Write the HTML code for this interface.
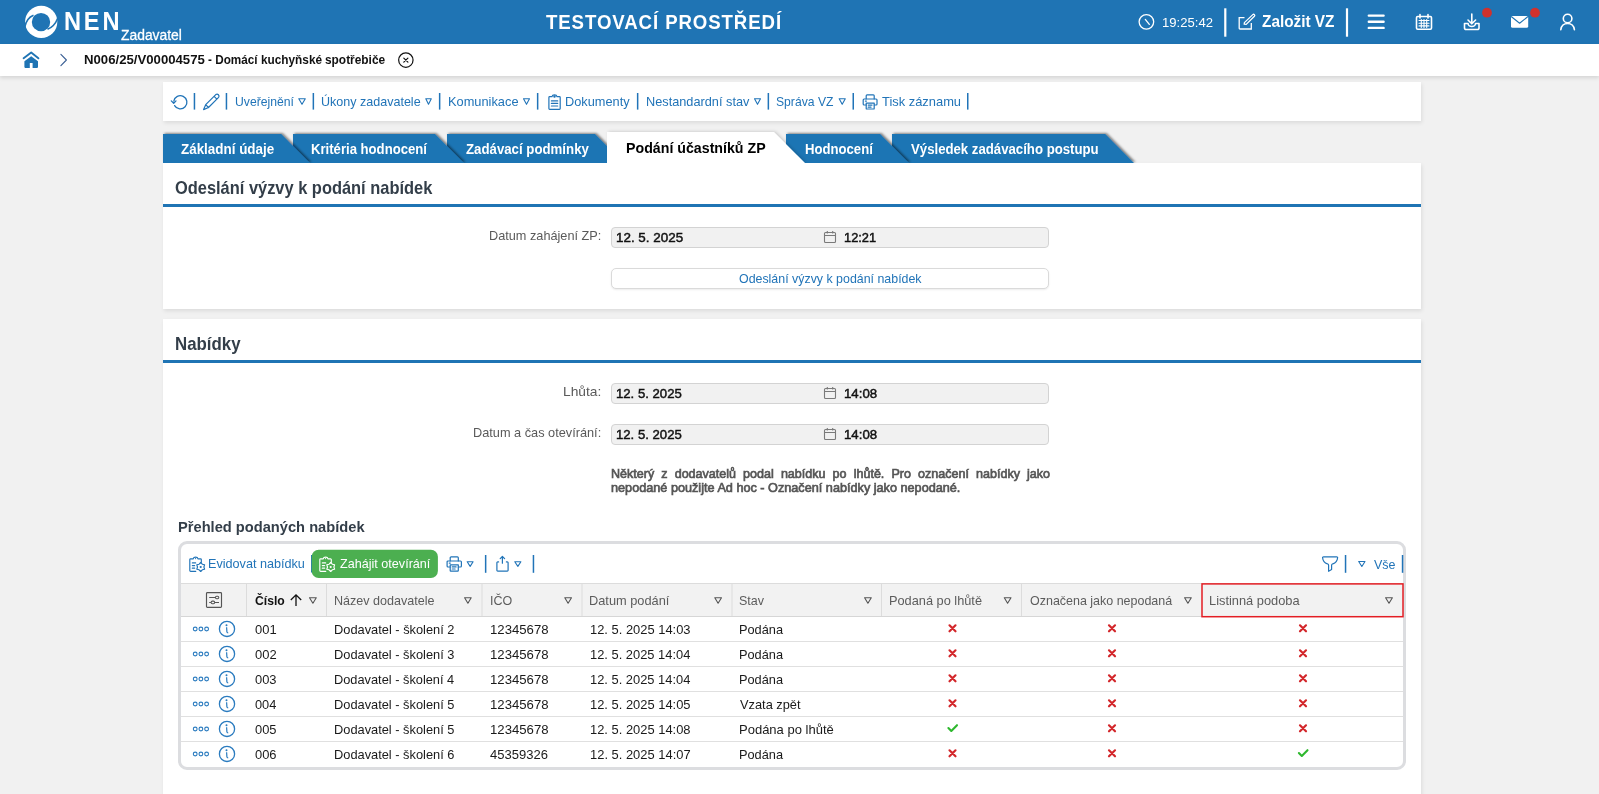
<!DOCTYPE html>
<html><head><meta charset="utf-8"><title>NEN</title>
<style>
html,body{margin:0;padding:0;}
body{width:1599px;height:794px;overflow:hidden;position:relative;background:#f1f1f1;font-family:"Liberation Sans",sans-serif;}
.tx{position:absolute;white-space:nowrap;line-height:1;transform-origin:0 50%;}
.a{position:absolute;}
.hdr{left:0;top:0;width:1599px;height:44px;background:#1f74b4;}
.bc{left:0;top:44px;width:1599px;height:32px;background:#fff;box-shadow:0 2px 4px rgba(0,0,0,.12);}
.panel{background:#fff;box-shadow:1px 2px 4px rgba(0,0,0,.09);}
.sep{position:absolute;width:2px;background:#2071b5;}
.hsep{position:absolute;width:2px;background:#fff;}
.inp{position:absolute;left:611px;width:436px;height:19px;background:#f1f1f1;border:1px solid #d3d3d3;border-radius:4px;}
.btn{position:absolute;left:611px;width:436px;height:18px;background:#fff;border:1px solid #dadada;border-radius:5px;box-shadow:0 1px 2px rgba(0,0,0,.08);}
.line{position:absolute;height:1px;background:#dedede;}
.vline{position:absolute;width:1px;background:#d8d8d8;}
svg{position:absolute;overflow:visible;}

</style></head><body>
<div class="a hdr"></div>
<div class="a bc"></div>
<!-- logo -->
<svg style="left:0;top:0" width="70" height="44" viewBox="0 0 70 44">
  <circle cx="41.2" cy="21.9" r="16.1" fill="#fff"/>
  <circle cx="41" cy="22.1" r="9.2" fill="#1f74b4"/>
  <path d="M24.6 27.5 C 26 21, 29 17, 33.5 15.3" fill="none" stroke="#1f74b4" stroke-width="1.6"/>
  <path d="M57.6 18.5 C 55.5 24, 52 27.5, 47.5 29.3" fill="none" stroke="#1f74b4" stroke-width="1.6"/>
</svg>
<!-- header right icons -->
<svg style="left:1130px;top:0" width="469" height="44" viewBox="1130 0 469 44" fill="none" stroke="#fff" stroke-width="1.6" stroke-linecap="round" stroke-linejoin="round">
  <!-- clock -->
  <circle cx="1146.4" cy="21.85" r="7.3" stroke-width="1.3"/>
  <path d="M1145.3 19.4 L1149.3 24.4" stroke-width="1.3"/>
  <!-- separators -->
  <rect x="1224.2" y="8.3" width="2.2" height="28.4" fill="#fff" stroke="none"/>
  <rect x="1345.9" y="8.3" width="2.2" height="28.4" fill="#fff" stroke="none"/>
  <!-- edit -->
  <path d="M1244.5 17.6 H1239.2 V28.2 a0.8 0.8 0 0 0 0.8 0.8 H1251.3 V23" stroke-width="1.3" stroke-linejoin="miter" stroke-linecap="butt"/>
  <path d="M1252.8 14.6 a1.1 1.1 0 0 1 1.6 1.6 L1246.2 24.4 L1244.2 24.2 L1244.4 22.6 Z" stroke-width="1.3"/>
  <!-- hamburger -->
  <path d="M1368.8 15.6 H1383.6 M1368.8 21.8 H1383.6 M1368.8 27.9 H1383.6" stroke-width="2.4"/>
  <!-- calendar -->
  <rect x="1416.5" y="16.5" width="15" height="12.8" rx="1.2"/>
  <path d="M1420 14.5 V18 M1428 14.5 V18" />
  <path d="M1419 20.5 H1429 M1419 23.2 H1429 M1419 25.9 H1429 M1421.3 19.5 V27.5 M1424 19.5 V27.5 M1426.7 19.5 V27.5" stroke-width="1.1"/>
  <!-- download -->
  <path d="M1471.8 14 V23.5 M1468 20 L1471.8 23.8 L1475.6 20"/>
  <path d="M1464.5 23.5 V28 a1.5 1.5 0 0 0 1.5 1.5 H1477.5 a1.5 1.5 0 0 0 1.5 -1.5 V23.5 H1475.5 a3.7 3 0 0 1 -7.4 0 H1464.5"/>
  <!-- mail -->
  <rect x="1511" y="16" width="17.2" height="11.8" rx="1.6" fill="#fff" stroke="none"/>
  <path d="M1511.5 16.8 L1519.6 23.2 L1527.7 16.8" stroke="#1f74b4" stroke-width="1.1"/>
  <!-- user -->
  <circle cx="1567.6" cy="18.5" r="4.3"/>
  <path d="M1560.8 29.6 C1561.5 25, 1564 23.5, 1567.6 23.5 C1571.2 23.5, 1573.7 25, 1574.4 29.6"/>
  <!-- red dots -->
  <circle cx="1487" cy="12.7" r="4.9" fill="#d0312d" stroke="none"/>
  <circle cx="1535" cy="12.7" r="4.9" fill="#d0312d" stroke="none"/>
</svg>
<!-- breadcrumb icons -->
<svg style="left:0;top:44px" width="440" height="32" viewBox="0 44 440 32">
  <path d="M23.6 58.3 L31.2 52.6 L38.4 58.3" fill="none" stroke="#1f74b4" stroke-width="1.9" stroke-linejoin="round" stroke-linecap="round"/>
  <path d="M24.4 61.3 L31.2 56.2 L38 61.3 V67.1 a0.8 0.8 0 0 1 -0.8 0.8 H32.6 V62.9 H29.8 V67.9 H25.2 a0.8 0.8 0 0 1 -0.8 -0.8 Z" fill="#1f74b4"/>
  <path d="M60.9 54.3 L66.4 60 L60.9 65.6" fill="none" stroke="#3a5f94" stroke-width="1.1" stroke-linecap="round" stroke-linejoin="round"/>
  <circle cx="405.85" cy="60.1" r="7.2" fill="none" stroke="#111" stroke-width="1.2"/>
  <path d="M403.8 58.1 L407.9 62.2 M407.9 58.1 L403.8 62.2" stroke="#111" stroke-width="1.2" stroke-linecap="round"/>
</svg>
<!-- toolbar panel -->
<div class="a panel" style="left:163px;top:82px;width:1258px;height:39px;"></div>
<svg style="left:163px;top:82px" width="820" height="39" viewBox="163 82 820 39" fill="none" stroke="#2174b8" stroke-width="1.4" stroke-linecap="round" stroke-linejoin="round">
  <!-- refresh -->
  <path d="M174.6 105.6 A6.6 6.6 0 1 0 173.8 101.2" stroke-width="1.3"/>
  <path d="M171.3 100.9 L173.7 103.2 L176 100.9" stroke-width="1.3"/>
  <!-- pencil -->
  <path d="M203.6 109.6 L205.7 104.7 L215.8 94.6 A2 2 0 0 1 218.6 97.4 L208.5 107.5 Z M205.7 104.7 L208.5 107.5 M214.1 96.3 L216.9 99.1" stroke-width="1.2"/>
  <!-- doc clipboard -->
  <path d="M548.9 97.4 a0.8 0.8 0 0 1 0.8 -0.8 H552 C552.4 94.3, 556.6 94.3, 557 96.6 H559.4 a0.8 0.8 0 0 1 0.8 0.8 V108.5 a0.8 0.8 0 0 1 -0.8 0.8 H549.7 a0.8 0.8 0 0 1 -0.8 -0.8 Z" stroke-width="1.2"/>
  <path d="M551.4 100.9 H557.7 M551.4 103.4 H557.7 M551.4 106 H557.7" stroke-width="1.2"/>
  <circle cx="554.5" cy="96.6" r="0.55" fill="#2174b8"/>
  <!-- printer -->
    <path d="M866.2 99.0 V95.80000000000001 a0.9 0.9 0 0 1 0.9 -0.9 H873.3000000000001 a0.9 0.9 0 0 1 0.9 0.9 V99.0" stroke-width="1.2"/>
    <path d="M866.2 105.0 H864.1 a0.9 0.9 0 0 1 -0.9 -0.9 V99.9 a0.9 0.9 0 0 1 0.9 -0.9 H876.1 a0.9 0.9 0 0 1 0.9 0.9 V104.1 a0.9 0.9 0 0 1 -0.9 0.9 H874.2" stroke-width="1.2"/>
    <path d="M866.2 103.1 H874.2 V108.4 a0.6 0.6 0 0 1 -0.6 0.6 H866.8000000000001 a0.6 0.6 0 0 1 -0.6 -0.6 Z" stroke-width="1.2"/>
    <path d="M868.2 105.1 H872.0 M868.2 107.19999999999999 H871.0" stroke-width="1.2"/>
    <path d="M865.4000000000001 101.1 H866.4000000000001" stroke-width="1.2"/>
  <!-- triangles -->
  <path d="M298.8 98.8 H305.3 L302 104.3 Z M425.8 98.8 H431.3 L428.5 104.3 Z M523.5 98.8 H529.5 L526.5 104.3 Z M754.5 98.8 H760.5 L757.5 104.3 Z M839.2 98.8 H845.3 L842.2 104.3 Z" stroke-width="1.1"/>
  <g stroke="none" fill="#2174b8">
    <rect x="193.7" y="93" width="1.5" height="16.6"/>
    <rect x="225.7" y="93" width="1.5" height="16.6"/>
    <rect x="312.6" y="93" width="1.5" height="16.6"/>
    <rect x="438.9" y="93" width="1.5" height="16.6"/>
    <rect x="536.9" y="93" width="1.5" height="16.6"/>
    <rect x="636.9" y="93" width="1.5" height="16.6"/>
    <rect x="767.6" y="93" width="1.5" height="16.6"/>
    <rect x="852.5" y="93" width="1.5" height="16.6"/>
    <rect x="967" y="93" width="1.5" height="16.6"/>
  </g>
</svg>
<!-- section1 panel -->
<div class="a panel" style="left:163px;top:163px;width:1258px;height:146px;"></div>
<div class="a" style="left:163px;top:204px;width:1258px;height:3px;background:#1f74b4;"></div>
<!-- tabs -->
<svg style="left:150px;top:125px;overflow:hidden" width="1000" height="38" viewBox="150 125 1000 38">
  <defs>
    <filter id="sh" x="-5%" y="-30%" width="110%" height="160%">
      <feDropShadow dx="1.5" dy="-0.8" stdDeviation="1.1" flood-color="#000" flood-opacity="0.5"/>
    </filter>
    <filter id="sh2" x="-5%" y="-30%" width="110%" height="160%">
      <feDropShadow dx="1.5" dy="-0.5" stdDeviation="1.4" flood-color="#000" flood-opacity="0.16"/>
    </filter>
  </defs>
  <g fill="#1f74b4">
    <path filter="url(#sh)" d="M892 134 H1105.2 L1134 163 H892 Z"/>
    <path filter="url(#sh)" d="M786 134 H880.1 L909 163 H786 Z"/>
    <path filter="url(#sh)" d="M447 134 H595 L624 163 H447 Z"/>
    <path filter="url(#sh)" d="M293 134 H435 L464 163 H293 Z"/>
    <path filter="url(#sh)" d="M163 134 H281.2 L310 163 H163 Z"/>
  </g>
  <path d="M607 132 H773.9 L805 163 H607 Z" fill="#fff" filter="url(#sh2)"/>
</svg>
<!-- section2 panel -->
<div class="a panel" style="left:163px;top:319px;width:1258px;height:480px;"></div>
<div class="a" style="left:163px;top:360px;width:1258px;height:3px;background:#1f74b4;"></div>
<!-- inputs -->
<div class="inp" style="top:227px;"></div>
<div class="btn" style="top:268px;height:19px;"></div>
<div class="inp" style="top:383px;"></div>
<div class="inp" style="top:424px;"></div>
<svg style="left:820px;top:220px" width="20" height="230" viewBox="820 220 20 230" fill="none" stroke="#7a7a7a" stroke-width="1.1">
  <g><rect x="824.5" y="232.5" width="11" height="10" rx="1"/><path d="M824.5 235.5 H835.5 M827.3 231 V233.5 M832.7 231 V233.5"/></g>
  <g transform="translate(0 156)"><rect x="824.5" y="232.5" width="11" height="10" rx="1"/><path d="M824.5 235.5 H835.5 M827.3 231 V233.5 M832.7 231 V233.5"/></g>
  <g transform="translate(0 197)"><rect x="824.5" y="232.5" width="11" height="10" rx="1"/><path d="M824.5 235.5 H835.5 M827.3 231 V233.5 M832.7 231 V233.5"/></g>
</svg>
<!-- table container -->
<div class="a" style="left:178px;top:541px;width:1222px;height:223px;border:3px solid #dcdde0;border-radius:9px;background:#fff;"></div>
<div class="a" style="left:181px;top:583px;width:1222px;height:32px;background:#f2f2f2;border-top:1px solid #dcdcdc;border-bottom:1px solid #d6d6d6;"></div>
<!-- table lines -->
<svg style="left:178px;top:541px" width="1230" height="230" viewBox="178 541 1230 230">
  <g fill="#dcdcdc">
    <rect x="246" y="584" width="1" height="32"/>
    <rect x="326" y="584" width="1" height="32"/>
    <rect x="481.5" y="584" width="1" height="32"/>
    <rect x="581.5" y="584" width="1" height="32"/>
    <rect x="731.5" y="584" width="1" height="32"/>
    <rect x="881" y="584" width="1" height="32"/>
    <rect x="1021" y="584" width="1" height="32"/>
  </g>
  <g fill="#e0e0e0">
    <rect x="181" y="641" width="1222" height="1"/>
    <rect x="181" y="666" width="1222" height="1"/>
    <rect x="181" y="691" width="1222" height="1"/>
    <rect x="181" y="716" width="1222" height="1"/>
    <rect x="181" y="741" width="1222" height="1"/>
  </g>
  <!-- red box -->
  <rect x="1202" y="583.9" width="201" height="32.8" fill="none" stroke="#e31e24" stroke-width="1.5"/>
  <!-- header triangles -->
  <g fill="none" stroke="#555" stroke-width="1.1" stroke-linejoin="round">
    <path d="M309.5 597.8 H316.3 L312.9 603.2 Z"/>
    <path d="M464.6 597.8 H471.2 L467.9 603.2 Z"/>
    <path d="M564.8 597.8 H571.5 L568.1 603.2 Z"/>
    <path d="M714.8 597.8 H721.5 L718.1 603.2 Z"/>
    <path d="M864.6 597.8 H871.3 L867.9 603.2 Z"/>
    <path d="M1004.3 597.8 H1011 L1007.6 603.2 Z"/>
    <path d="M1184.6 597.8 H1191.3 L1187.9 603.2 Z"/>
    <path d="M1385.6 597.8 H1392.4 L1389 603.2 Z"/>
  </g>
  <!-- sort arrow -->
  <path d="M296 606 V594.8 M290.8 600 L296 594.8 L301.2 600" fill="none" stroke="#111" stroke-width="1.3"/>
  <!-- settings icon -->
  <g fill="none" stroke="#555" stroke-width="1.05">
    <rect x="206.5" y="592.6" width="15" height="14.8" rx="0.9" stroke-width="1.15"/>
    <path d="M209.2 597.5 H215.3 M209.2 602.4 H210.9 M214.9 602.4 H219"/>
    <rect x="215.4" y="596.2" width="3.4" height="2.6" rx="1.3"/>
    <rect x="211.1" y="601.1" width="3.6" height="2.6" rx="1.3"/>
  </g>
  <!-- row icons -->
  <g fill="none" stroke="#2a7bbf" stroke-width="1.1">
    <circle cx="195.2" cy="629" r="1.9"/>
    <circle cx="200.9" cy="629" r="1.9"/>
    <circle cx="206.6" cy="629" r="1.9"/>
    <circle cx="227" cy="628.9" r="7.6" stroke-width="1.3"/>
    <path d="M226.6 627.2 L226.9 631.8 Q227.1 632.8 228.2 632.9" stroke-width="1.2"/>
    <circle cx="226.5" cy="625.3" r="0.45" fill="#2a7bbf"/>
  </g>
  <g transform="translate(0 25)" fill="none" stroke="#2a7bbf" stroke-width="1.1">
    <circle cx="195.2" cy="629" r="1.9"/>
    <circle cx="200.9" cy="629" r="1.9"/>
    <circle cx="206.6" cy="629" r="1.9"/>
    <circle cx="227" cy="628.9" r="7.6" stroke-width="1.3"/>
    <path d="M226.6 627.2 L226.9 631.8 Q227.1 632.8 228.2 632.9" stroke-width="1.2"/>
    <circle cx="226.5" cy="625.3" r="0.45" fill="#2a7bbf"/>
  </g>
  <g transform="translate(0 50)" fill="none" stroke="#2a7bbf" stroke-width="1.1">
    <circle cx="195.2" cy="629" r="1.9"/>
    <circle cx="200.9" cy="629" r="1.9"/>
    <circle cx="206.6" cy="629" r="1.9"/>
    <circle cx="227" cy="628.9" r="7.6" stroke-width="1.3"/>
    <path d="M226.6 627.2 L226.9 631.8 Q227.1 632.8 228.2 632.9" stroke-width="1.2"/>
    <circle cx="226.5" cy="625.3" r="0.45" fill="#2a7bbf"/>
  </g>
  <g transform="translate(0 75)" fill="none" stroke="#2a7bbf" stroke-width="1.1">
    <circle cx="195.2" cy="629" r="1.9"/>
    <circle cx="200.9" cy="629" r="1.9"/>
    <circle cx="206.6" cy="629" r="1.9"/>
    <circle cx="227" cy="628.9" r="7.6" stroke-width="1.3"/>
    <path d="M226.6 627.2 L226.9 631.8 Q227.1 632.8 228.2 632.9" stroke-width="1.2"/>
    <circle cx="226.5" cy="625.3" r="0.45" fill="#2a7bbf"/>
  </g>
  <g transform="translate(0 100)" fill="none" stroke="#2a7bbf" stroke-width="1.1">
    <circle cx="195.2" cy="629" r="1.9"/>
    <circle cx="200.9" cy="629" r="1.9"/>
    <circle cx="206.6" cy="629" r="1.9"/>
    <circle cx="227" cy="628.9" r="7.6" stroke-width="1.3"/>
    <path d="M226.6 627.2 L226.9 631.8 Q227.1 632.8 228.2 632.9" stroke-width="1.2"/>
    <circle cx="226.5" cy="625.3" r="0.45" fill="#2a7bbf"/>
  </g>
  <g transform="translate(0 125)" fill="none" stroke="#2a7bbf" stroke-width="1.1">
    <circle cx="195.2" cy="629" r="1.9"/>
    <circle cx="200.9" cy="629" r="1.9"/>
    <circle cx="206.6" cy="629" r="1.9"/>
    <circle cx="227" cy="628.9" r="7.6" stroke-width="1.3"/>
    <path d="M226.6 627.2 L226.9 631.8 Q227.1 632.8 228.2 632.9" stroke-width="1.2"/>
    <circle cx="226.5" cy="625.3" r="0.45" fill="#2a7bbf"/>
  </g>
  <!-- marks -->
  <g stroke="#d3272b" stroke-width="2.2" stroke-linecap="round">
    <path d="M949.5 625.3 L955.5 631.3 M955.5 625.3 L949.5 631.3"/>
  </g>
  <g transform="translate(159.5 0)" stroke="#d3272b" stroke-width="2.2" stroke-linecap="round">
    <path d="M949.5 625.3 L955.5 631.3 M955.5 625.3 L949.5 631.3"/>
  </g>
  <g transform="translate(350.5 0)" stroke="#d3272b" stroke-width="2.2" stroke-linecap="round">
    <path d="M949.5 625.3 L955.5 631.3 M955.5 625.3 L949.5 631.3"/>
  </g>
  <g transform="translate(0 25)" stroke="#d3272b" stroke-width="2.2" stroke-linecap="round">
    <path d="M949.5 625.3 L955.5 631.3 M955.5 625.3 L949.5 631.3"/>
  </g><g transform="translate(159.5 25)" stroke="#d3272b" stroke-width="2.2" stroke-linecap="round">
    <path d="M949.5 625.3 L955.5 631.3 M955.5 625.3 L949.5 631.3"/>
  </g><g transform="translate(350.5 25)" stroke="#d3272b" stroke-width="2.2" stroke-linecap="round">
    <path d="M949.5 625.3 L955.5 631.3 M955.5 625.3 L949.5 631.3"/>
  </g>
  <g transform="translate(0 50)" stroke="#d3272b" stroke-width="2.2" stroke-linecap="round">
    <path d="M949.5 625.3 L955.5 631.3 M955.5 625.3 L949.5 631.3"/>
  </g><g transform="translate(159.5 50)" stroke="#d3272b" stroke-width="2.2" stroke-linecap="round">
    <path d="M949.5 625.3 L955.5 631.3 M955.5 625.3 L949.5 631.3"/>
  </g><g transform="translate(350.5 50)" stroke="#d3272b" stroke-width="2.2" stroke-linecap="round">
    <path d="M949.5 625.3 L955.5 631.3 M955.5 625.3 L949.5 631.3"/>
  </g>
  <g transform="translate(0 75)" stroke="#d3272b" stroke-width="2.2" stroke-linecap="round">
    <path d="M949.5 625.3 L955.5 631.3 M955.5 625.3 L949.5 631.3"/>
  </g><g transform="translate(159.5 75)" stroke="#d3272b" stroke-width="2.2" stroke-linecap="round">
    <path d="M949.5 625.3 L955.5 631.3 M955.5 625.3 L949.5 631.3"/>
  </g><g transform="translate(350.5 75)" stroke="#d3272b" stroke-width="2.2" stroke-linecap="round">
    <path d="M949.5 625.3 L955.5 631.3 M955.5 625.3 L949.5 631.3"/>
  </g>
  <g transform="translate(159.5 100)" stroke="#d3272b" stroke-width="2.2" stroke-linecap="round">
    <path d="M949.5 625.3 L955.5 631.3 M955.5 625.3 L949.5 631.3"/>
  </g><g transform="translate(350.5 100)" stroke="#d3272b" stroke-width="2.2" stroke-linecap="round">
    <path d="M949.5 625.3 L955.5 631.3 M955.5 625.3 L949.5 631.3"/>
  </g>
  <g transform="translate(0 125)" stroke="#d3272b" stroke-width="2.2" stroke-linecap="round">
    <path d="M949.5 625.3 L955.5 631.3 M955.5 625.3 L949.5 631.3"/>
  </g><g transform="translate(159.5 125)" stroke="#d3272b" stroke-width="2.2" stroke-linecap="round">
    <path d="M949.5 625.3 L955.5 631.3 M955.5 625.3 L949.5 631.3"/>
  </g>
  <g fill="none" stroke="#2eb82e" stroke-width="2.1" stroke-linecap="round" stroke-linejoin="round">
    <path d="M948.4 728.1 L951.3 731 L957 725.2"/>
  </g>
  <g transform="translate(350.5 25)" fill="none" stroke="#2eb82e" stroke-width="2.1" stroke-linecap="round" stroke-linejoin="round">
    <path d="M948.4 728.1 L951.3 731 L957 725.2"/>
  </g>
  <!-- table toolbar -->
  <g fill="none" stroke="#2174b8" stroke-width="1.15" stroke-linejoin="round" stroke-linecap="round">
    <path d="M195.8 571.3 H190.60000000000002 a0.8 0.8 0 0 1 -0.8 -0.8 V559.6 a0.8 0.8 0 0 1 0.8 -0.8 H193.2 C193.6 556.6, 197.6 556.6, 198.0 558.8 H200.5 a0.8 0.8 0 0 1 0.8 0.8 V562.3"/>
    <path d="M200.70 562.50 L202.30 564.23 L204.60 564.75 L203.90 567.00 L204.60 569.25 L202.30 569.77 L200.70 571.50 L199.10 569.77 L196.80 569.25 L197.50 567.00 L196.80 564.75 L199.10 564.23 Z"/>
    <path d="M192.4 562.9 H195.6 M192.4 565.6 H194.6 M192.4 568.2 H194.6" stroke-width="1.3"/>
  </g>
  <circle cx="195.6" cy="558.6" r="0.6" fill="#2174b8"/>
  <circle cx="200.70" cy="567" r="1.1" fill="#2174b8"/>
  <rect x="311" y="555" width="1.5" height="17.5" fill="#2174b8"/>
  <rect x="311.7" y="549.8" width="126.2" height="28.2" rx="7" fill="#4caf50"/>
  <g fill="none" stroke="#fff" stroke-width="1.15" stroke-linejoin="round" stroke-linecap="round">
    <path d="M325.8 571.3 H320.6 a0.8 0.8 0 0 1 -0.8 -0.8 V559.6 a0.8 0.8 0 0 1 0.8 -0.8 H323.2 C323.6 556.6, 327.6 556.6, 328.0 558.8 H330.5 a0.8 0.8 0 0 1 0.8 0.8 V562.3"/>
    <path d="M330.70 562.50 L332.30 564.23 L334.60 564.75 L333.90 567.00 L334.60 569.25 L332.30 569.77 L330.70 571.50 L329.10 569.77 L326.80 569.25 L327.50 567.00 L326.80 564.75 L329.10 564.23 Z"/>
    <path d="M322.4 562.9 H325.6 M322.4 565.6 H324.6 M322.4 568.2 H324.6" stroke-width="1.3"/>
  </g>
  <circle cx="325.6" cy="558.6" r="0.6" fill="#fff"/>
  <circle cx="330.70" cy="567" r="1.1" fill="#fff"/>
  <g fill="none" stroke="#2174b8" stroke-width="1.3" stroke-linejoin="round" stroke-linecap="round">
    <!-- printer -->
    <path d="M450.2 561.0 V557.6999999999999 a0.9 0.9 0 0 1 0.9 -0.9 H457.40000000000003 a0.9 0.9 0 0 1 0.9 0.9 V561.0" stroke-width="1.2"/>
    <path d="M450.2 567.0 H448.0 a0.9 0.9 0 0 1 -0.9 -0.9 V561.9 a0.9 0.9 0 0 1 0.9 -0.9 H460.5 a0.9 0.9 0 0 1 0.9 0.9 V566.1 a0.9 0.9 0 0 1 -0.9 0.9 H458.3" stroke-width="1.2"/>
    <path d="M450.2 564.9 H458.3 V570.5 a0.6 0.6 0 0 1 -0.6 0.6 H450.8 a0.6 0.6 0 0 1 -0.6 -0.6 Z" stroke-width="1.2"/>
    <path d="M452.2 566.9 H456.1 M452.2 569.0 H455.1" stroke-width="1.2"/>
    <path d="M449.3 563.1 H450.3" stroke-width="1.2"/>
    <path d="M467.2 561.8 H473.1 L470.15 566.4 Z" stroke-width="1.1"/>
    <!-- share -->
    <path d="M498.6 561.9 H497.7 a0.8 0.8 0 0 0 -0.8 0.8 V570.3 a0.8 0.8 0 0 0 0.8 0.8 H507.3 a0.8 0.8 0 0 0 0.8 -0.8 V562.7 a0.8 0.8 0 0 0 -0.8 -0.8 H506.4 M502.4 563.2 V556.6 M500.2 558.7 L502.4 556.5 L504.6 558.7" stroke-width="1.2"/>
    <path d="M514.8 561.8 H520.9 L517.85 566.4 Z" stroke-width="1.1"/>
    <!-- funnel -->
    <path d="M1322.6 557.8 Q1322.4 556.9 1323.5 556.9 H1336.7 Q1337.8 556.9 1337.6 557.8 C1337.3 561.2, 1335 563.2, 1332.8 563.8 Q1331.6 564.2 1331.6 565.2 V569.6 L1328.6 571.3 V565.2 Q1328.6 564.2 1327.4 563.8 C1325.2 563.2, 1322.9 561.2, 1322.6 557.8 Z" stroke-width="1.2"/>
    <path d="M1358.7 561.5 H1365 L1361.85 566.5 Z" stroke-width="1.1"/>
  </g>
  <g fill="#2174b8">
    <rect x="484.9" y="555" width="1.5" height="17.8"/>
    <rect x="532.7" y="555" width="1.5" height="17.8"/>
    <rect x="1344.8" y="555" width="1.5" height="17.8"/>
    <rect x="1401.8" y="555" width="1.5" height="17.8"/>
  </g>
</svg>

<span class="tx" id="t0" style="left:63.92px;top:8.67px;font-size:25.2px;font-weight:700;color:#fff;letter-spacing:3px;transform:scaleX(0.9372);">NEN</span>
<span class="tx" id="t1" style="left:121.06px;top:26.88px;font-size:15.5px;font-weight:400;color:#fff;-webkit-text-stroke:0.3px #fff;transform:scaleX(0.8941);">Zadavatel</span>
<span class="tx" id="t2" style="left:545.79px;top:11.65px;font-size:20.5px;font-weight:700;color:#fff;letter-spacing:1px;transform:scaleX(0.9087);">TESTOVACÍ PROSTŘEDÍ</span>
<span class="tx" id="t3" style="left:1162.00px;top:15.90px;font-size:13px;font-weight:400;color:#fff;transform:scaleX(1.0068);">19:25:42</span>
<span class="tx" id="t4" style="left:1261.94px;top:13.61px;font-size:15.7px;font-weight:700;color:#fff;transform:scaleX(0.9785);">Založit VZ</span>
<span class="tx" id="t5" style="left:83.62px;top:53.72px;font-size:12.5px;font-weight:700;color:#111;transform:scaleX(1.0537);">N006/25/V00004575</span>
<span class="tx" id="t6" style="left:208.14px;top:53.72px;font-size:12.5px;font-weight:700;color:#111;transform:scaleX(0.9384);">- Domácí</span>
<span class="tx" id="t7" style="left:261.18px;top:53.72px;font-size:12.5px;font-weight:700;color:#111;transform:scaleX(0.9443);">kuchyňské</span>
<span class="tx" id="t8" style="left:324.98px;top:53.72px;font-size:12.5px;font-weight:700;color:#111;transform:scaleX(0.9511);">spotřebiče</span>
<span class="tx" id="t9" style="left:234.66px;top:95.00px;font-size:13px;font-weight:400;color:#2174b8;transform:scaleX(0.9368);">Uveřejnění</span>
<span class="tx" id="t10" style="left:321.03px;top:95.00px;font-size:13px;font-weight:400;color:#2174b8;transform:scaleX(0.9640);">Úkony zadavatele</span>
<span class="tx" id="t11" style="left:447.95px;top:95.00px;font-size:13px;font-weight:400;color:#2174b8;transform:scaleX(0.9857);">Komunikace</span>
<span class="tx" id="t12" style="left:565.45px;top:95.00px;font-size:13px;font-weight:400;color:#2174b8;transform:scaleX(0.9821);">Dokumenty</span>
<span class="tx" id="t13" style="left:645.96px;top:95.00px;font-size:13px;font-weight:400;color:#2174b8;transform:scaleX(0.9798);">Nestandardní stav</span>
<span class="tx" id="t14" style="left:776.45px;top:95.00px;font-size:13px;font-weight:400;color:#2174b8;transform:scaleX(0.9350);">Správa VZ</span>
<span class="tx" id="t15" style="left:881.81px;top:95.00px;font-size:13px;font-weight:400;color:#2174b8;transform:scaleX(0.9916);">Tisk záznamu</span>
<span class="tx" id="t16" style="left:181.40px;top:141.85px;font-size:14px;font-weight:700;color:#fff;transform:scaleX(0.9579);">Základní údaje</span>
<span class="tx" id="t17" style="left:311.22px;top:141.85px;font-size:14px;font-weight:700;color:#fff;transform:scaleX(0.9372);">Kritéria hodnocení</span>
<span class="tx" id="t18" style="left:465.71px;top:141.85px;font-size:14px;font-weight:700;color:#fff;transform:scaleX(0.9456);">Zadávací podmínky</span>
<span class="tx" id="t19" style="left:626.25px;top:140.10px;font-size:15px;font-weight:700;color:#000;transform:scaleX(0.9465);">Podání účastníků ZP</span>
<span class="tx" id="t20" style="left:804.52px;top:141.85px;font-size:14px;font-weight:700;color:#fff;transform:scaleX(0.9375);">Hodnocení</span>
<span class="tx" id="t21" style="left:911.01px;top:141.85px;font-size:14px;font-weight:700;color:#fff;transform:scaleX(0.9422);">Výsledek zadávacího postupu</span>
<span class="tx" id="t22" style="left:174.73px;top:178.64px;font-size:18.5px;font-weight:700;color:#333e49;transform:scaleX(0.8873);">Odeslání výzvy k podání nabídek</span>
<span class="tx" id="t23" style="left:489.26px;top:229.00px;font-size:13px;font-weight:400;color:#5a5a5a;transform:scaleX(0.9775);">Datum zahájení ZP:</span>
<span class="tx" id="t24" style="left:615.88px;top:231.85px;font-size:12.7px;font-weight:400;color:#111;-webkit-text-stroke:0.45px #111;transform:scaleX(1.0565);">12. 5. 2025</span>
<span class="tx" id="t25" style="left:843.92px;top:231.85px;font-size:12.7px;font-weight:400;color:#111;-webkit-text-stroke:0.45px #111;transform:scaleX(1.0112);">12:21</span>
<span class="tx" id="t26" style="left:738.91px;top:273.25px;font-size:12.7px;font-weight:400;color:#2174b8;transform:scaleX(0.9768);">Odeslání výzvy k podání nabídek</span>
<span class="tx" id="t27" style="left:174.57px;top:334.94px;font-size:18.5px;font-weight:700;color:#333e49;transform:scaleX(0.9104);">Nabídky</span>
<span class="tx" id="t28" style="left:563.17px;top:385.00px;font-size:13px;font-weight:400;color:#5a5a5a;transform:scaleX(1.0619);">Lhůta:</span>
<span class="tx" id="t29" style="left:615.80px;top:387.65px;font-size:12.7px;font-weight:400;color:#111;-webkit-text-stroke:0.45px #111;transform:scaleX(1.0355);">12. 5. 2025</span>
<span class="tx" id="t30" style="left:843.89px;top:387.65px;font-size:12.7px;font-weight:400;color:#111;-webkit-text-stroke:0.45px #111;transform:scaleX(1.0420);">14:08</span>
<span class="tx" id="t31" style="left:473.25px;top:425.80px;font-size:13px;font-weight:400;color:#5a5a5a;transform:scaleX(0.9803);">Datum a čas otevírání:</span>
<span class="tx" id="t32" style="left:615.80px;top:428.65px;font-size:12.7px;font-weight:400;color:#111;-webkit-text-stroke:0.45px #111;transform:scaleX(1.0355);">12. 5. 2025</span>
<span class="tx" id="t33" style="left:843.89px;top:428.65px;font-size:12.7px;font-weight:400;color:#111;-webkit-text-stroke:0.45px #111;transform:scaleX(1.0420);">14:08</span>
<span class="tx" id="t34" style="left:610.67px;top:467.52px;font-size:12.5px;font-weight:400;color:#555;word-spacing:3.6px;-webkit-text-stroke:0.65px #555;transform:scaleX(1.0032);">Některý z dodavatelů podal nabídku po lhůtě. Pro označení nabídky jako</span>
<span class="tx" id="t35" style="left:610.86px;top:482.12px;font-size:12.5px;font-weight:400;color:#555;-webkit-text-stroke:0.65px #555;transform:scaleX(1.0136);">nepodané použijte Ad hoc - Označení nabídky jako nepodané.</span>
<span class="tx" id="t36" style="left:177.62px;top:518.58px;font-size:15.5px;font-weight:700;color:#333e49;transform:scaleX(0.9458);">Přehled podaných nabídek</span>
<span class="tx" id="t37" style="left:208.46px;top:557.10px;font-size:13px;font-weight:400;color:#2174b8;transform:scaleX(0.9713);">Evidovat nabídku</span>
<span class="tx" id="t38" style="left:339.50px;top:557.10px;font-size:13px;font-weight:400;color:#fff;transform:scaleX(0.9693);">Zahájit otevírání</span>
<span class="tx" id="t39" style="left:1373.85px;top:558.40px;font-size:13px;font-weight:400;color:#2174b8;transform:scaleX(0.9600);">Vše</span>
<span class="tx" id="t40" style="left:254.80px;top:593.80px;font-size:13px;font-weight:700;color:#111;transform:scaleX(0.9364);">Číslo</span>
<span class="tx" id="t41" style="left:334.27px;top:594.30px;font-size:13px;font-weight:400;color:#5c5c5c;transform:scaleX(0.9665);">Název dodavatele</span>
<span class="tx" id="t42" style="left:489.55px;top:594.30px;font-size:13px;font-weight:400;color:#5c5c5c;transform:scaleX(0.9623);">IČO</span>
<span class="tx" id="t43" style="left:589.15px;top:594.30px;font-size:13px;font-weight:400;color:#5c5c5c;transform:scaleX(0.9846);">Datum podání</span>
<span class="tx" id="t44" style="left:739.43px;top:594.30px;font-size:13px;font-weight:400;color:#5c5c5c;transform:scaleX(0.9614);">Stav</span>
<span class="tx" id="t45" style="left:888.95px;top:594.30px;font-size:13px;font-weight:400;color:#5c5c5c;transform:scaleX(0.9822);">Podaná po lhůtě</span>
<span class="tx" id="t46" style="left:1029.91px;top:594.30px;font-size:13px;font-weight:400;color:#5c5c5c;transform:scaleX(0.9595);">Označena jako nepodaná</span>
<span class="tx" id="t47" style="left:1209.45px;top:594.30px;font-size:13px;font-weight:400;color:#5c5c5c;transform:scaleX(0.9874);">Listinná podoba</span>
<span class="tx" id="t48" style="left:254.99px;top:622.80px;font-size:13px;font-weight:400;color:#1a1a1a;transform:scaleX(0.9971);">001</span>
<span class="tx" id="t49" style="left:334.45px;top:622.80px;font-size:13px;font-weight:400;color:#1a1a1a;transform:scaleX(0.9867);">Dodavatel - školení 2</span>
<span class="tx" id="t50" style="left:489.60px;top:622.80px;font-size:13px;font-weight:400;color:#1a1a1a;transform:scaleX(1.0126);">12345678</span>
<span class="tx" id="t51" style="left:589.72px;top:622.80px;font-size:13px;font-weight:400;color:#1a1a1a;transform:scaleX(0.9936);">12. 5. 2025 14:03</span>
<span class="tx" id="t52" style="left:739.45px;top:622.80px;font-size:13px;font-weight:400;color:#1a1a1a;transform:scaleX(0.9826);">Podána</span>
<span class="tx" id="t53" style="left:254.99px;top:647.80px;font-size:13px;font-weight:400;color:#1a1a1a;transform:scaleX(0.9980);">002</span>
<span class="tx" id="t54" style="left:334.45px;top:647.80px;font-size:13px;font-weight:400;color:#1a1a1a;transform:scaleX(0.9860);">Dodavatel - školení 3</span>
<span class="tx" id="t55" style="left:489.60px;top:647.80px;font-size:13px;font-weight:400;color:#1a1a1a;transform:scaleX(1.0126);">12345678</span>
<span class="tx" id="t56" style="left:589.72px;top:647.80px;font-size:13px;font-weight:400;color:#1a1a1a;transform:scaleX(0.9917);">12. 5. 2025 14:04</span>
<span class="tx" id="t57" style="left:739.45px;top:647.80px;font-size:13px;font-weight:400;color:#1a1a1a;transform:scaleX(0.9826);">Podána</span>
<span class="tx" id="t58" style="left:255.00px;top:672.80px;font-size:13px;font-weight:400;color:#1a1a1a;transform:scaleX(0.9940);">003</span>
<span class="tx" id="t59" style="left:334.45px;top:672.80px;font-size:13px;font-weight:400;color:#1a1a1a;transform:scaleX(0.9844);">Dodavatel - školení 4</span>
<span class="tx" id="t60" style="left:489.60px;top:672.80px;font-size:13px;font-weight:400;color:#1a1a1a;transform:scaleX(1.0126);">12345678</span>
<span class="tx" id="t61" style="left:589.72px;top:672.80px;font-size:13px;font-weight:400;color:#1a1a1a;transform:scaleX(0.9917);">12. 5. 2025 14:04</span>
<span class="tx" id="t62" style="left:739.45px;top:672.80px;font-size:13px;font-weight:400;color:#1a1a1a;transform:scaleX(0.9826);">Podána</span>
<span class="tx" id="t63" style="left:255.00px;top:697.80px;font-size:13px;font-weight:400;color:#1a1a1a;transform:scaleX(0.9849);">004</span>
<span class="tx" id="t64" style="left:334.45px;top:697.80px;font-size:13px;font-weight:400;color:#1a1a1a;transform:scaleX(0.9858);">Dodavatel - školení 5</span>
<span class="tx" id="t65" style="left:489.60px;top:697.80px;font-size:13px;font-weight:400;color:#1a1a1a;transform:scaleX(1.0126);">12345678</span>
<span class="tx" id="t66" style="left:589.72px;top:697.80px;font-size:13px;font-weight:400;color:#1a1a1a;transform:scaleX(0.9933);">12. 5. 2025 14:05</span>
<span class="tx" id="t67" style="left:740.44px;top:697.80px;font-size:13px;font-weight:400;color:#1a1a1a;transform:scaleX(0.9856);">Vzata zpět</span>
<span class="tx" id="t68" style="left:255.00px;top:722.80px;font-size:13px;font-weight:400;color:#1a1a1a;transform:scaleX(0.9928);">005</span>
<span class="tx" id="t69" style="left:334.45px;top:722.80px;font-size:13px;font-weight:400;color:#1a1a1a;transform:scaleX(0.9858);">Dodavatel - školení 5</span>
<span class="tx" id="t70" style="left:489.60px;top:722.80px;font-size:13px;font-weight:400;color:#1a1a1a;transform:scaleX(1.0126);">12345678</span>
<span class="tx" id="t71" style="left:589.72px;top:722.80px;font-size:13px;font-weight:400;color:#1a1a1a;transform:scaleX(0.9935);">12. 5. 2025 14:08</span>
<span class="tx" id="t72" style="left:739.43px;top:722.80px;font-size:13px;font-weight:400;color:#1a1a1a;transform:scaleX(1.0004);">Podána po lhůtě</span>
<span class="tx" id="t73" style="left:255.00px;top:747.80px;font-size:13px;font-weight:400;color:#1a1a1a;transform:scaleX(0.9940);">006</span>
<span class="tx" id="t74" style="left:334.45px;top:747.80px;font-size:13px;font-weight:400;color:#1a1a1a;transform:scaleX(0.9860);">Dodavatel - školení 6</span>
<span class="tx" id="t75" style="left:490.30px;top:747.80px;font-size:13px;font-weight:400;color:#1a1a1a;transform:scaleX(1.0005);">45359326</span>
<span class="tx" id="t76" style="left:589.72px;top:747.80px;font-size:13px;font-weight:400;color:#1a1a1a;transform:scaleX(0.9944);">12. 5. 2025 14:07</span>
<span class="tx" id="t77" style="left:739.45px;top:747.80px;font-size:13px;font-weight:400;color:#1a1a1a;transform:scaleX(0.9826);">Podána</span>
</body></html>
